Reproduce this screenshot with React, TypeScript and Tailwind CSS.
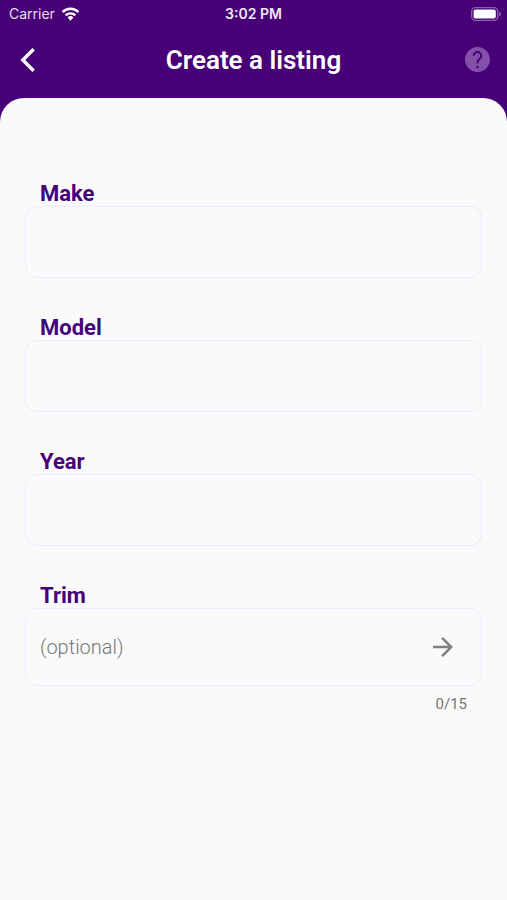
import { useState } from "react";

const MAX_TRIM = 15;

function StatusBar() {
  return (
    <div className="grid h-7 grid-cols-3 items-center font-['Inter',sans-serif] text-sm text-white">
      <div className="flex items-center gap-1.5 pl-[9px]">
        <span className="text-[#e9dff2]">Carrier</span>
        <svg viewBox="0 0 20 15" className="h-[14px] w-[19px]" aria-hidden="true">
          <g fill="none" stroke="#fff" strokeWidth="2.6">
            <path d="M1.5 5.4a12.2 12.2 0 0 1 17 0" />
            <path d="M4.8 9a7.4 7.4 0 0 1 10.4 0" />
          </g>
          <path d="M10 14.6 6.9 11.3a4.4 4.4 0 0 1 6.2 0z" fill="#fff" />
        </svg>
      </div>
      <span className="text-center font-semibold text-[#efe8f5]">3:02 PM</span>
      <svg viewBox="0 0 32 14" className="mr-1 h-[14px] w-8 justify-self-end" aria-hidden="true">
        <rect x="0.7" y="0.7" width="26" height="12.6" rx="3.8" fill="none" stroke="#8a62ac" strokeWidth="1.3" />
        <rect x="2.6" y="2.6" width="22.2" height="8.8" rx="2" fill="#fff" />
        <path d="M28.2 4.8c2.6.8 2.6 3.6 0 4.4z" fill="#8a62ac" />
      </svg>
    </div>
  );
}

function NavBar() {
  return (
    <div className="grid h-[70px] grid-cols-[1fr_auto_1fr] items-center px-4 pb-[7px]">
      <button type="button" aria-label="Back" className="flex size-6 items-center justify-center">
        <svg viewBox="0 0 24 24" className="size-6" fill="none" stroke="#fff" strokeWidth="3.4" aria-hidden="true">
          <path d="M17.6 1.2 6.8 12l10.8 10.8" />
        </svg>
      </button>
      <h1 className="font-['Roboto',sans-serif] text-[26px] leading-8 font-semibold text-white">Create a listing</h1>
      <button type="button" aria-label="Help" className="flex size-7 items-center justify-center justify-self-end">
        <svg viewBox="2 2 20 20" className="size-[25px]" fill="#834fa8" aria-hidden="true">
          <path d="M12 2C6.48 2 2 6.48 2 12s4.48 10 10 10 10-4.48 10-10S17.52 2 12 2zm.9 17h-1.8v-1.8h1.8V19zm1.87-7.55-.9.92C13.15 13.1 12.8 13.7 12.8 15h-1.6v-.5c0-1.1.45-2.1 1.17-2.83l1.24-1.26c.37-.36.59-.86.59-1.41a2.2 2.2 0 0 0-4.4 0H8.2a3.8 3.8 0 0 1 7.6 0c0 .88-.46 1.88-1.03 2.45z" />
        </svg>
      </button>
    </div>
  );
}

const labelClass = "block h-7 pl-[15px] text-[22px] leading-[31px] font-bold text-[#45007a]";
const boxClass = "w-full rounded-xl border border-[#eceaff] bg-transparent px-[14px]";

function Field({ id, label }: { id: string; label: string }) {
  return (
    <div>
      <label htmlFor={id} className={labelClass}>
        {label}
      </label>
      <input id={id} type="text" className={`${boxClass} block h-[72px] text-xl text-[#45007a] outline-none`} />
    </div>
  );
}

export default function App() {
  const [trim, setTrim] = useState("");

  return (
    <div className="flex min-h-screen flex-col bg-[#480077]">
      <header>
        <StatusBar />
        <NavBar />
      </header>
      <main className="flex-1 rounded-t-3xl bg-[#fafafa] px-[25px] pt-20 font-['Roboto',sans-serif]">
        <form className="flex flex-col gap-[34px]">
          <Field id="make" label="Make" />
          <Field id="model" label="Model" />
          <Field id="year" label="Year" />
          <div>
            <label htmlFor="trim" className={labelClass}>
              Trim
            </label>
            <div className={`${boxClass} flex h-[78px] items-center`}>
              <input
                id="trim"
                type="text"
                maxLength={MAX_TRIM}
                value={trim}
                onChange={(e) => setTrim(e.target.value)}
                placeholder="(optional)"
                className="h-full min-w-0 flex-1 bg-transparent text-xl font-light text-[#45007a] outline-none placeholder:text-[#777777]"
              />
              <button type="button" aria-label="Next" className="mr-2 flex size-8 items-center justify-center">
                <svg viewBox="4 4 16 16" className="size-5" fill="#808080" aria-hidden="true">
                  <path d="m12 4-1.41 1.41L16.17 11H4v2h12.17l-5.58 5.59L12 20l8-8z" />
                </svg>
              </button>
            </div>
            <p className="pt-2 pr-[15px] text-right text-[15px] leading-5 text-[#757575]">
              {trim.length}/{MAX_TRIM}
            </p>
          </div>
        </form>
      </main>
    </div>
  );
}
